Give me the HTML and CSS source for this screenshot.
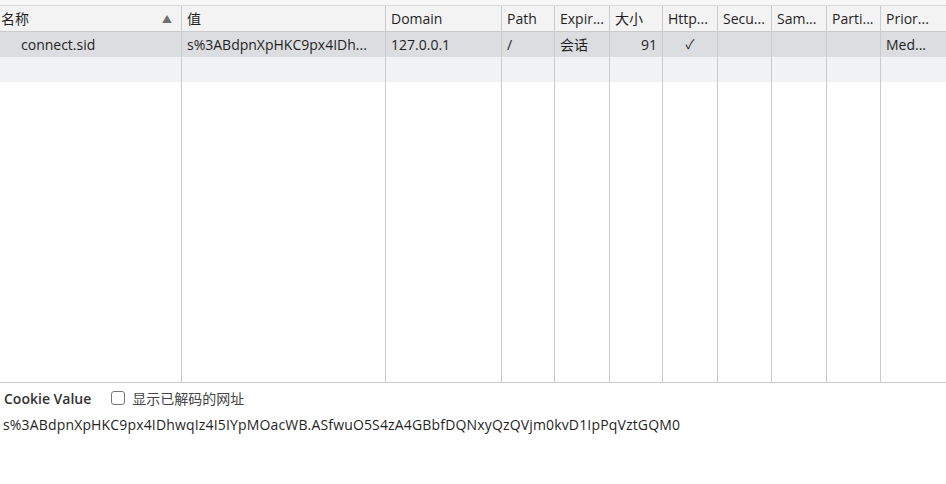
FILE: index.html
```html
<!DOCTYPE html>
<html lang="zh-CN">
<head>
<meta charset="utf-8">
<link rel="stylesheet" href="styles.css">
</head>
<body>
<div class="page">
  <div class="grid">
    <div class="cell head">名称<span class="sort">▲</span></div>
    <div class="cell head">值</div>
    <div class="cell head">Domain</div>
    <div class="cell head">Path</div>
    <div class="cell head">Expir...</div>
    <div class="cell head">大小</div>
    <div class="cell head">Http...</div>
    <div class="cell head">Secu...</div>
    <div class="cell head">Sam...</div>
    <div class="cell head">Parti...</div>
    <div class="cell head">Prior...</div>

    <div class="cell sel name">connect.sid</div>
    <div class="cell sel">s%3ABdpnXpHKC9px4IDh...</div>
    <div class="cell sel">127.0.0.1</div>
    <div class="cell sel">/</div>
    <div class="cell sel">会话</div>
    <div class="cell sel num">91</div>
    <div class="cell sel center">✓</div>
    <div class="cell sel"></div>
    <div class="cell sel"></div>
    <div class="cell sel"></div>
    <div class="cell sel">Med...</div>

    <div class="cell stripe"></div>
    <div class="cell stripe"></div>
    <div class="cell stripe"></div>
    <div class="cell stripe"></div>
    <div class="cell stripe"></div>
    <div class="cell stripe"></div>
    <div class="cell stripe"></div>
    <div class="cell stripe"></div>
    <div class="cell stripe"></div>
    <div class="cell stripe"></div>
    <div class="cell stripe"></div>

    <div class="cell fill"></div>
    <div class="cell fill"></div>
    <div class="cell fill"></div>
    <div class="cell fill"></div>
    <div class="cell fill"></div>
    <div class="cell fill"></div>
    <div class="cell fill"></div>
    <div class="cell fill"></div>
    <div class="cell fill"></div>
    <div class="cell fill"></div>
    <div class="cell fill"></div>
  </div>
  <div class="detail">
    <div class="detail-bar">
      <span class="detail-title">Cookie Value</span>
      <label class="decode"><span class="box"></span>显示已解码的网址</label>
    </div>
    <div class="value">s%3ABdpnXpHKC9px4IDhwqIz4I5IYpMOacWB.ASfwuO5S4zA4GBbfDQNxyQzQVjm0kvD1IpPqVztGQM0</div>
  </div>
</div>
</body>
</html>
```
FILE: styles.css
```css
html, body {
  margin: 0;
  padding: 0;
  background: #ffffff;
}
body {
  font-family: "Open Sans", "Noto Sans CJK SC", sans-serif;
  font-size: 14px;
  color: #1f1f1f;
}
.page {
  width: 946px;
  height: 484px;
  padding-top: 5px;
  box-sizing: border-box;
  display: flex;
  flex-direction: column;
  background: linear-gradient(#f7f7f7, #f7f7f7) top / 100% 5px no-repeat;
}
.grid {
  display: grid;
  grid-template-columns: 182px 204px 116px 53px 55px 53px 55px 54px 55px 54px 1fr;
  grid-template-rows: 26px 25px 25px 1fr;
  height: 378px;
  border-top: 1px solid #dadada;
  border-bottom: 1px solid #c9c9c9;
  box-sizing: border-box;
  background: #fff;
}
.cell {
  border-right: 1px solid #cbcbcb;
  padding: 0 5px;
  display: flex;
  align-items: center;
  white-space: nowrap;
  overflow: hidden;
  box-sizing: border-box;
  line-height: 1;
}
.cell:nth-child(11n) {
  border-right: none;
}
.head {
  background: #f3f3f3;
  border-bottom: 1px solid #cbcbcb;
}
.head:first-child {
  padding-left: 1px;
  justify-content: space-between;
  padding-right: 9px;
}
.sort {
  font-size: 10px;
  color: #6e6e6e;
}
.sel {
  background: #dcdde0;
}
.name {
  padding-left: 21px;
}
.num {
  justify-content: flex-end;
}
.center {
  justify-content: center;
  font-size: 13px;
}
.stripe {
  background: #f1f2f4;
}
.detail {
  flex: 1;
  padding: 0 3px;
}
.detail-bar {
  display: flex;
  align-items: center;
  height: 30px;
  padding-left: 1px;
  gap: 20px;
}
.detail-title {
  font-weight: 600;
  font-size: 14px;
  color: #333;
}
.decode {
  display: flex;
  align-items: center;
  gap: 7px;
  color: #444;
}
.box {
  width: 12px;
  height: 12px;
  border: 1px solid #767676;
  border-radius: 3px;
  background: #fff;
}
.value {
  height: 22px;
  display: flex;
  align-items: center;
  letter-spacing: 0.16px;
}
```
